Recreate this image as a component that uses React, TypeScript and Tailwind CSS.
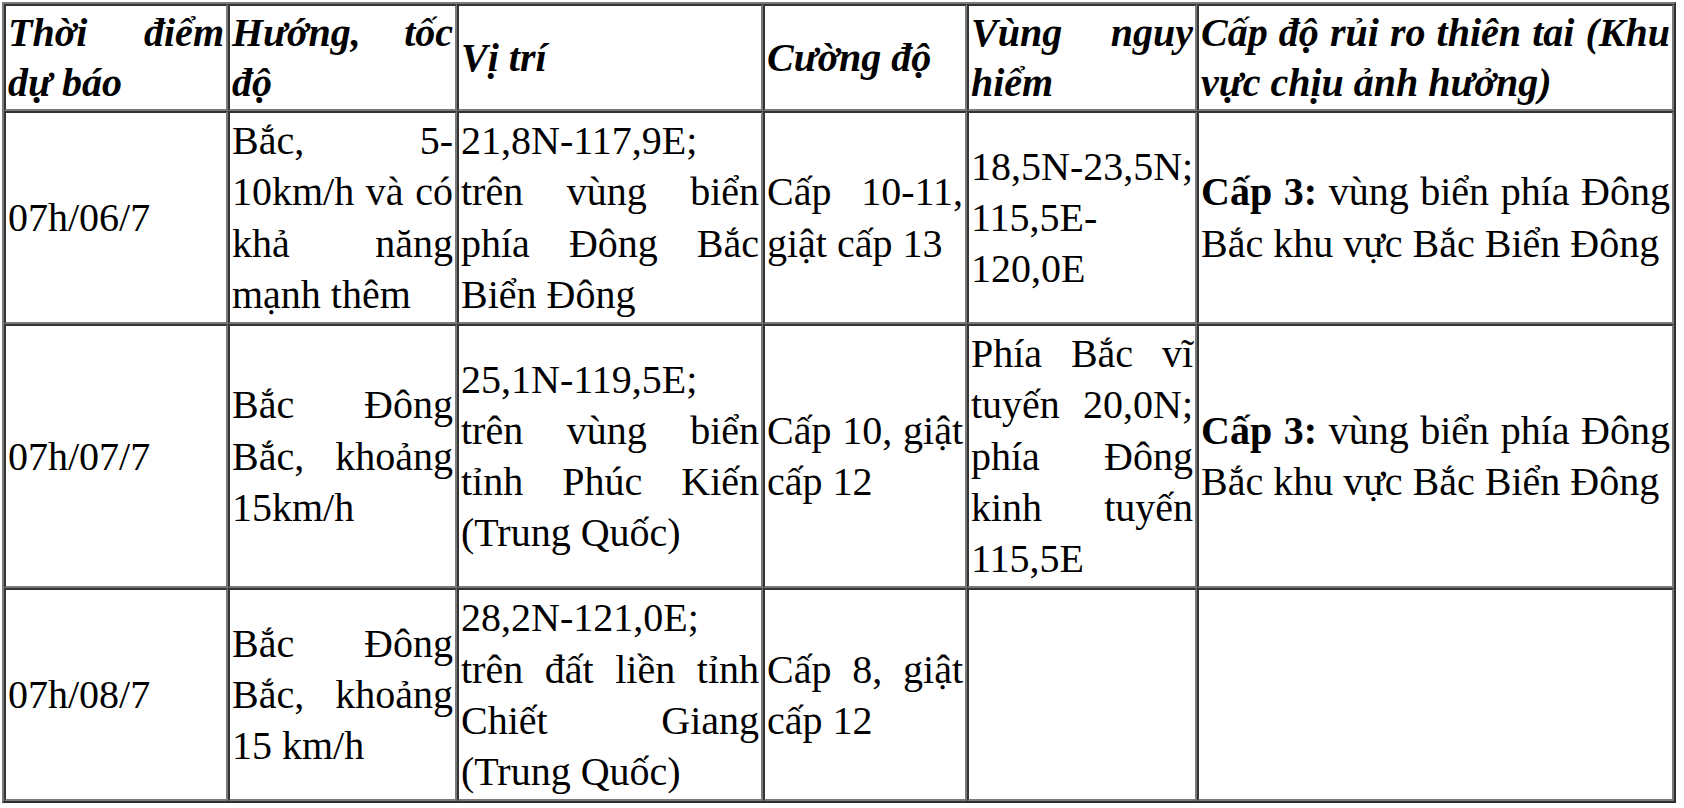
const headers = [
  { text: "Thời điểm dự báo", w: "w-[224px]" },
  { text: "Hướng, tốc độ", w: "w-[229px]" },
  { text: "Vị trí", w: "w-[306px]" },
  { text: "Cường độ", w: "w-[204px]" },
  { text: "Vùng nguy hiểm", w: "w-[230px]" },
  { text: "Cấp độ rủi ro thiên tai (Khu vực chịu ảnh hưởng)", w: "w-[477px]" },
]

const risk = (
  <>
    <b>Cấp 3:</b> vùng biển phía Đông Bắc khu vực Bắc Biển Đông
  </>
)

const rows: React.ReactNode[][] = [
  [
    "07h/06/7",
    "Bắc, 5-10km/h và có khả năng mạnh thêm",
    "21,8N-117,9E; trên vùng biển phía Đông Bắc Biển Đông",
    "Cấp 10-11, giật cấp 13",
    <>
      <span className="whitespace-nowrap">18,5N-23,5N;</span> 115,5E-120,0E
    </>,
    risk,
  ],
  [
    "07h/07/7",
    "Bắc Đông Bắc, khoảng 15km/h",
    "25,1N-119,5E; trên vùng biển tỉnh Phúc Kiến (Trung Quốc)",
    "Cấp 10, giật cấp 12",
    "Phía Bắc vĩ tuyến 20,0N; phía Đông kinh tuyến 115,5E",
    risk,
  ],
  [
    "07h/08/7",
    "Bắc Đông Bắc, khoảng 15 km/h",
    "28,2N-121,0E; trên đất liền tỉnh Chiết Giang (Trung Quốc)",
    "Cấp 8, giật cấp 12",
    "",
    "",
  ],
]

// inset look of an old-style bordered table cell
const cell =
  "border-2 border-t-[#333] border-l-[#333] border-b-[#7a7a7a] border-r-[#7a7a7a] p-0.5 align-middle text-justify"

export default function App() {
  return (
    <div
      className="min-h-screen bg-white p-0.5 text-black text-[40px] leading-[51.25px]"
      style={{ fontFamily: '"Liberation Serif", "Times New Roman", serif' }}
    >
      <table className="w-[1674px] table-fixed border-separate border-spacing-0 border-2 border-t-[#7a7a7a] border-l-[#7a7a7a] border-b-[#2f2f2f] border-r-[#2f2f2f]">
        <thead>
          <tr>
            {headers.map((h) => (
              <th key={h.text} className={`${cell} ${h.w} font-bold italic leading-[49.5px]`}>
                {h.text}
              </th>
            ))}
          </tr>
        </thead>
        <tbody>
          {rows.map((r, i) => (
            <tr key={i}>
              {r.map((c, j) => (
                <td key={j} className={cell}>
                  {c}
                </td>
              ))}
            </tr>
          ))}
        </tbody>
      </table>
    </div>
  )
}
